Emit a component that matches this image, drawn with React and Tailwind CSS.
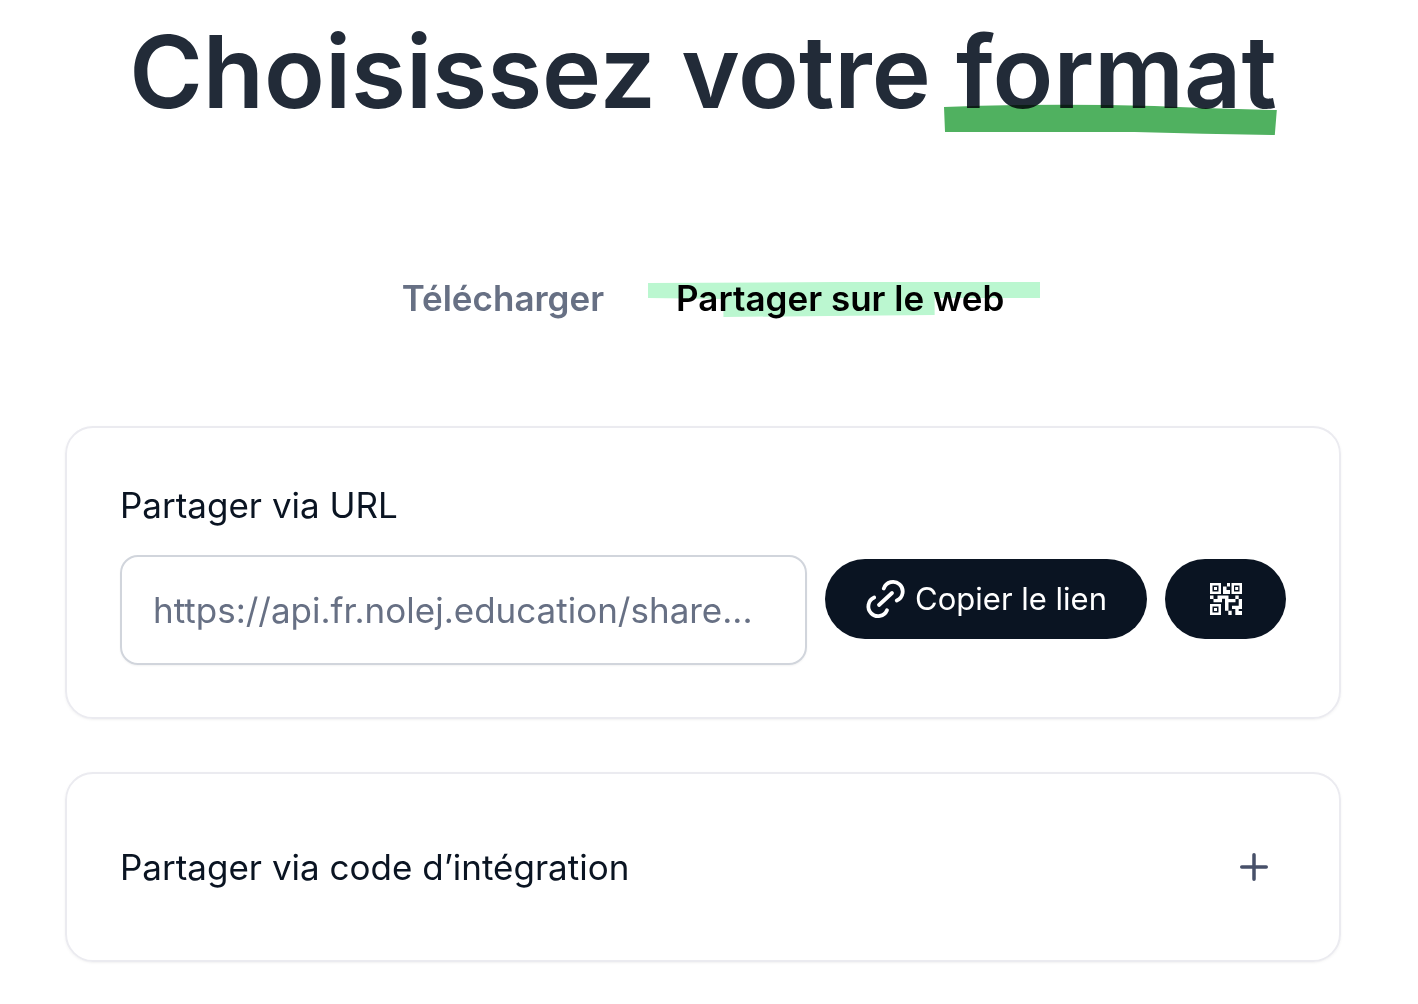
import { useState } from 'react';

const SHARE_URL = 'https://api.fr.nolej.education/share...';

// ─── Icons ────────────────────────────────────────────────────────
function LinkIcon() {
  return (
    <svg viewBox="0 0 40 40" className="size-10" fill="none" stroke="currentColor" strokeWidth="3.8" strokeLinecap="round" aria-hidden="true">
      <path d="M14 26 L27 14" />
      <path d="M18.800 9.500 A9.700 9.700 0 1 1 31.800 21.500" />
      <path d="M9.200 18.500 A9.700 9.700 0 1 0 22 31.200" />
    </svg>
  );
}

function QrIcon() {
  return (
    <svg viewBox="0 0 32 32" className="size-8" fill="currentColor" aria-hidden="true">
      <path fillRule="evenodd" d="M0 0h11v11h-11zM2.500 2.500v6h6v-6zM21.500 0h10.500v11h-10.500zM24 2.500v6h5.500v-6zM0 21h11v11h-11zM2.500 23.500v6h6v-6z" />
      <path d="M4 4h3v3h-3zM25.200 4h3v3h-3zM4 25h3v3h-3z" />
      <path d="M17 0h3v3.500h-3zM13 3.500h3.500v3.500h3.500v4h-7z" />
      <path d="M0 12.500h3.500v3.500h-3.500zM3.500 16h4v-3.500h11v3.500h7v3.300h-7v8.400h-3.500v-12h-3v3.600h-8.500zM25.300 12.500h3.400v3.500h-3.400z" />
      <path d="M28.700 16h3.300v10h-3.300v2h3.300v4h-6.700v-6h-3.300v-3.300h6.700zM18.300 27.700h3.400v4.300h-3.400z" />
    </svg>
  );
}

function PlusIcon() {
  return (
    <svg viewBox="0 0 28 28" className="size-7 text-[#475069]" fill="none" stroke="currentColor" strokeWidth="3.5" strokeLinecap="round" aria-hidden="true">
      <path d="M14 1.750v24.500M1.750 14h24.500" />
    </svg>
  );
}

// ─── Tabs ─────────────────────────────────────────────────────────
function Tab({ active, onClick, children }) {
  return (
    <button
      type="button"
      role="tab"
      aria-selected={active}
      onClick={onClick}
      className={`relative isolate px-7 py-2 text-[35px] leading-10 font-semibold ${active ? 'text-black' : 'text-[#677084]'}`}
    >
      {active && (
        <svg viewBox="0 0 390 36" preserveAspectRatio="none" className="absolute top-3 -right-2 left-0 -z-10 h-9 w-[calc(100%+8px)] text-[#bbf7d0]" fill="currentColor" aria-hidden="true">
          <path d="M0 1 L190 0 L390 0 V16 H285 V33 L180 34 L75 35 V17 L0 16Z" />
        </svg>
      )}
      {children}
    </button>
  );
}

export default function App() {
  const [tab, setTab] = useState('web');
  const [embedOpen, setEmbedOpen] = useState(false);

  return (
    <main className="pt-4 pr-[77px] pb-10 pl-[65px] font-['Inter',sans-serif] text-[#0a1422]">
      <h1 className="text-center text-[100px] leading-28 font-semibold text-[#222b38]">
        Choisissez votre{' '}
        <span className="relative inline-block">
          format
          <svg viewBox="0 0 332 32" preserveAspectRatio="none" className="absolute -bottom-2 -left-3 h-8 w-[calc(100%+12px)] text-[#50b160] mix-blend-multiply" fill="currentColor" aria-hidden="true">
            <path d="M0 3 Q100 -1 210 2 Q270 5 332 6 L330 31 Q260 30 190 28 H1Z" />
          </svg>
        </span>
      </h1>

      <div role="tablist" className="mt-[142px] flex justify-center gap-4">
        <Tab active={tab === 'download'} onClick={() => setTab('download')}>Télécharger</Tab>
        <Tab active={tab === 'web'} onClick={() => setTab('web')}>Partager sur le web</Tab>
      </div>

      <section className="mt-25 rounded-[28px] border-2 border-[#ebebf0] px-[53px] pt-[57px] pb-13 shadow-sm shadow-black/5">
        <label htmlFor="share-url" className="block text-[35px] leading-10">Partager via URL</label>
        <div className="mt-[30px] flex items-start gap-[18px]">
          <input id="share-url" readOnly value={SHARE_URL} className="h-[110px] min-w-0 flex-1 rounded-[18px] border-2 border-[#d1d5dc] px-[31px] text-[35px] text-[#677084] shadow-xs" />
          <button type="button" className="mt-1 flex h-20 items-center gap-2.5 rounded-full bg-[#0a1422] px-10 text-[31px] text-white">
            <LinkIcon />
            Copier le lien
          </button>
          <button type="button" aria-label="QR code" className="mt-1 flex h-20 w-[121px] items-center justify-center rounded-full bg-[#0a1422] text-white">
            <QrIcon />
          </button>
        </div>
      </section>

      <section className="mt-[53px] rounded-[28px] border-2 border-[#ebebf0] shadow-sm shadow-black/5">
        <button type="button" aria-expanded={embedOpen} onClick={() => setEmbedOpen(!embedOpen)} className="flex w-full items-center justify-between py-[73px] pr-[71px] pl-[53px] text-[35px] leading-10">
          Partager via code d’intégration
          <PlusIcon />
        </button>
      </section>
    </main>
  );
}
